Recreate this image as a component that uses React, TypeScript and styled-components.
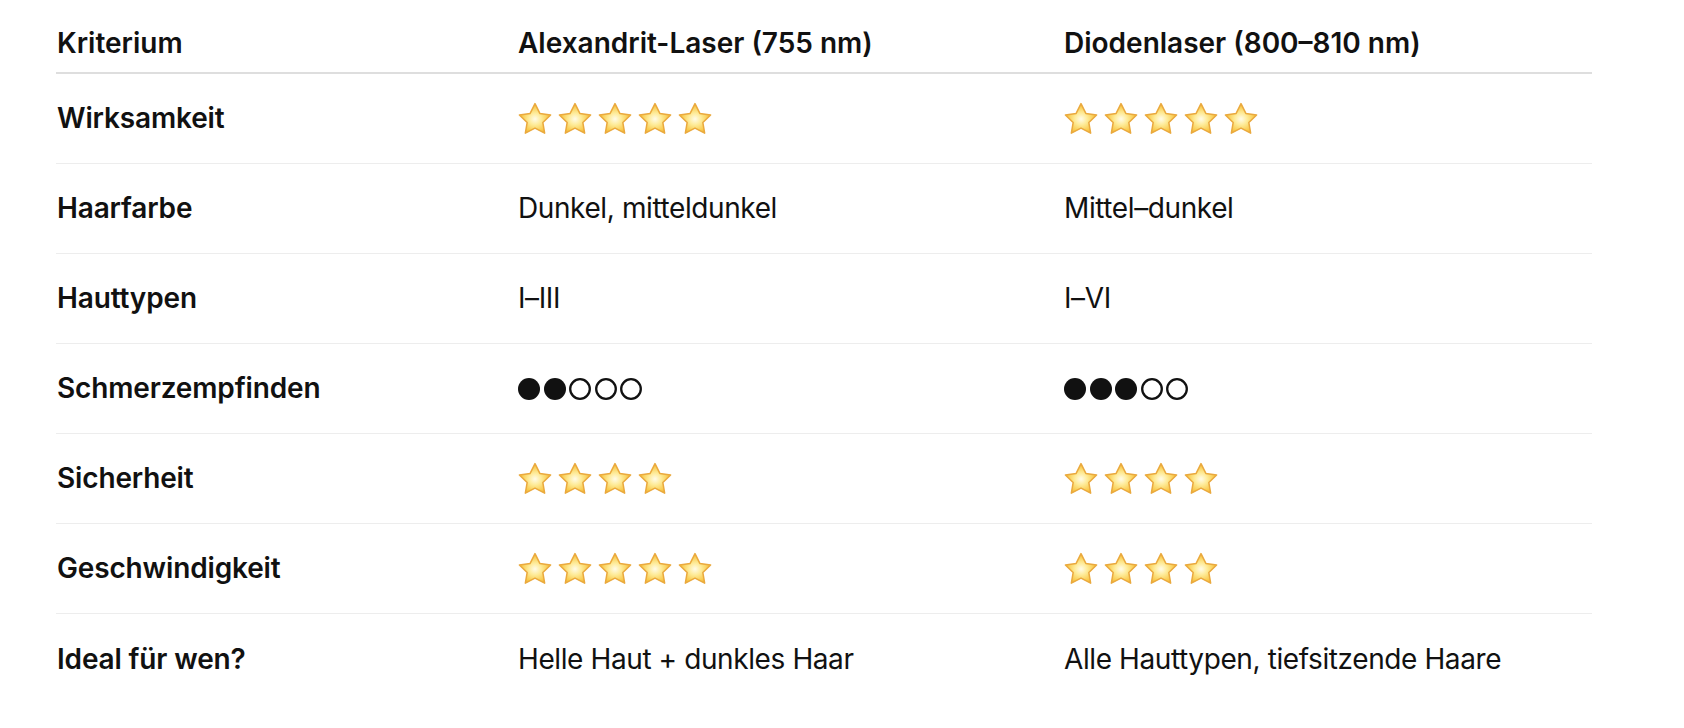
import React from "react";
import styled, { createGlobalStyle } from "styled-components";

const GlobalStyle = createGlobalStyle`
  html, body {
    margin: 0;
    padding: 0;
    background: #ffffff;
  }
  body {
    font-family: Inter, "Noto Sans", "Liberation Sans", sans-serif;
    color: #111111;
  }
`;

const Page = styled.div`
  padding: 0 92px 0 56px;
`;

const Table = styled.div`
  display: grid;
  grid-template-columns: 461px 546px 529px;
  width: 1536px;
`;

const HeadCell = styled.div`
  padding: 26px 0 11px 1px;
  font-size: 28px;
  line-height: 35px;
  font-weight: 600;
  border-bottom: 2px solid #dedede;
  white-space: nowrap;
`;

const Cell = styled.div<{ $label?: boolean; $last?: boolean }>`
  display: flex;
  align-items: center;
  height: 90px;
  padding-left: 1px;
  box-sizing: border-box;
  font-size: 28px;
  line-height: 35px;
  font-weight: ${(p) => (p.$label ? 600 : 400)};
  letter-spacing: ${(p) => (p.$label ? "-0.15px" : "-0.4px")};
  border-bottom: ${(p) => (p.$last ? "none" : "1px solid #ededed")};
  white-space: nowrap;
`;

const Rating = styled.span`
  display: inline-flex;
  align-items: center;
  gap: 6px;
  margin-top: -1px;
`;

const DotRow = styled.span`
  display: inline-flex;
  align-items: center;
  gap: 3.5px;
`;

const Star: React.FC<{ id: string }> = ({ id }) => (
  <svg width="34" height="33" viewBox="0 0 34 33" aria-hidden="true">
    <defs>
      <radialGradient id={id} cx="50%" cy="52%" r="58%">
        <stop offset="0%" stopColor="#fffbe8" />
        <stop offset="35%" stopColor="#feeb98" />
        <stop offset="75%" stopColor="#f8c94a" />
        <stop offset="100%" stopColor="#eeaa2c" />
      </radialGradient>
    </defs>
    <path
      d="M17 1.6 L21.85 11.4 L32.6 12.95 L24.85 20.55 L26.65 31.2 L17 26.2 L7.35 31.2 L9.15 20.55 L1.4 12.95 L12.15 11.4 Z"
      fill={`url(#${id})`}
      stroke="#eaa93e"
      strokeWidth="1.5"
      strokeLinejoin="round"
    />
  </svg>
);

const Stars: React.FC<{ n: number; k: string }> = ({ n, k }) => (
  <Rating>
    {Array.from({ length: n }).map((_, i) => (
      <Star key={i} id={`g-${k}-${i}`} />
    ))}
  </Rating>
);

const Dot: React.FC<{ filled: boolean }> = ({ filled }) => (
  <svg width="22" height="22" viewBox="0 0 22 22" aria-hidden="true">
    {filled ? (
      <circle cx="11" cy="11" r="11" fill="#111111" />
    ) : (
      <circle cx="11" cy="11" r="9.8" fill="none" stroke="#111111" strokeWidth="2.3" />
    )}
  </svg>
);

const Dots: React.FC<{ filled: number }> = ({ filled }) => (
  <DotRow>
    {Array.from({ length: 5 }).map((_, i) => (
      <Dot key={i} filled={i < filled} />
    ))}
  </DotRow>
);

type Row = { label: string; a: React.ReactNode; b: React.ReactNode };

const rows: Row[] = [
  { label: "Wirksamkeit", a: <Stars n={5} k="w1" />, b: <Stars n={5} k="w2" /> },
  { label: "Haarfarbe", a: "Dunkel, mitteldunkel", b: "Mittel–dunkel" },
  { label: "Hauttypen", a: "I–III", b: "I–VI" },
  { label: "Schmerzempfinden", a: <Dots filled={2} />, b: <Dots filled={3} /> },
  { label: "Sicherheit", a: <Stars n={4} k="s1" />, b: <Stars n={4} k="s2" /> },
  { label: "Geschwindigkeit", a: <Stars n={5} k="g1" />, b: <Stars n={4} k="g2" /> },
  { label: "Ideal für wen?", a: "Helle Haut + dunkles Haar", b: "Alle Hauttypen, tiefsitzende Haare" },
];

export default function App() {
  return (
    <>
      <GlobalStyle />
      <Page>
        <Table>
          <HeadCell>Kriterium</HeadCell>
          <HeadCell>Alexandrit-Laser (755 nm)</HeadCell>
          <HeadCell>Diodenlaser (800–810 nm)</HeadCell>
          {rows.map((r, i) => {
            const last = i === rows.length - 1;
            return (
              <React.Fragment key={r.label}>
                <Cell $label $last={last}>{r.label}</Cell>
                <Cell $last={last}>{r.a}</Cell>
                <Cell $last={last}>{r.b}</Cell>
              </React.Fragment>
            );
          })}
        </Table>
      </Page>
    </>
  );
}
